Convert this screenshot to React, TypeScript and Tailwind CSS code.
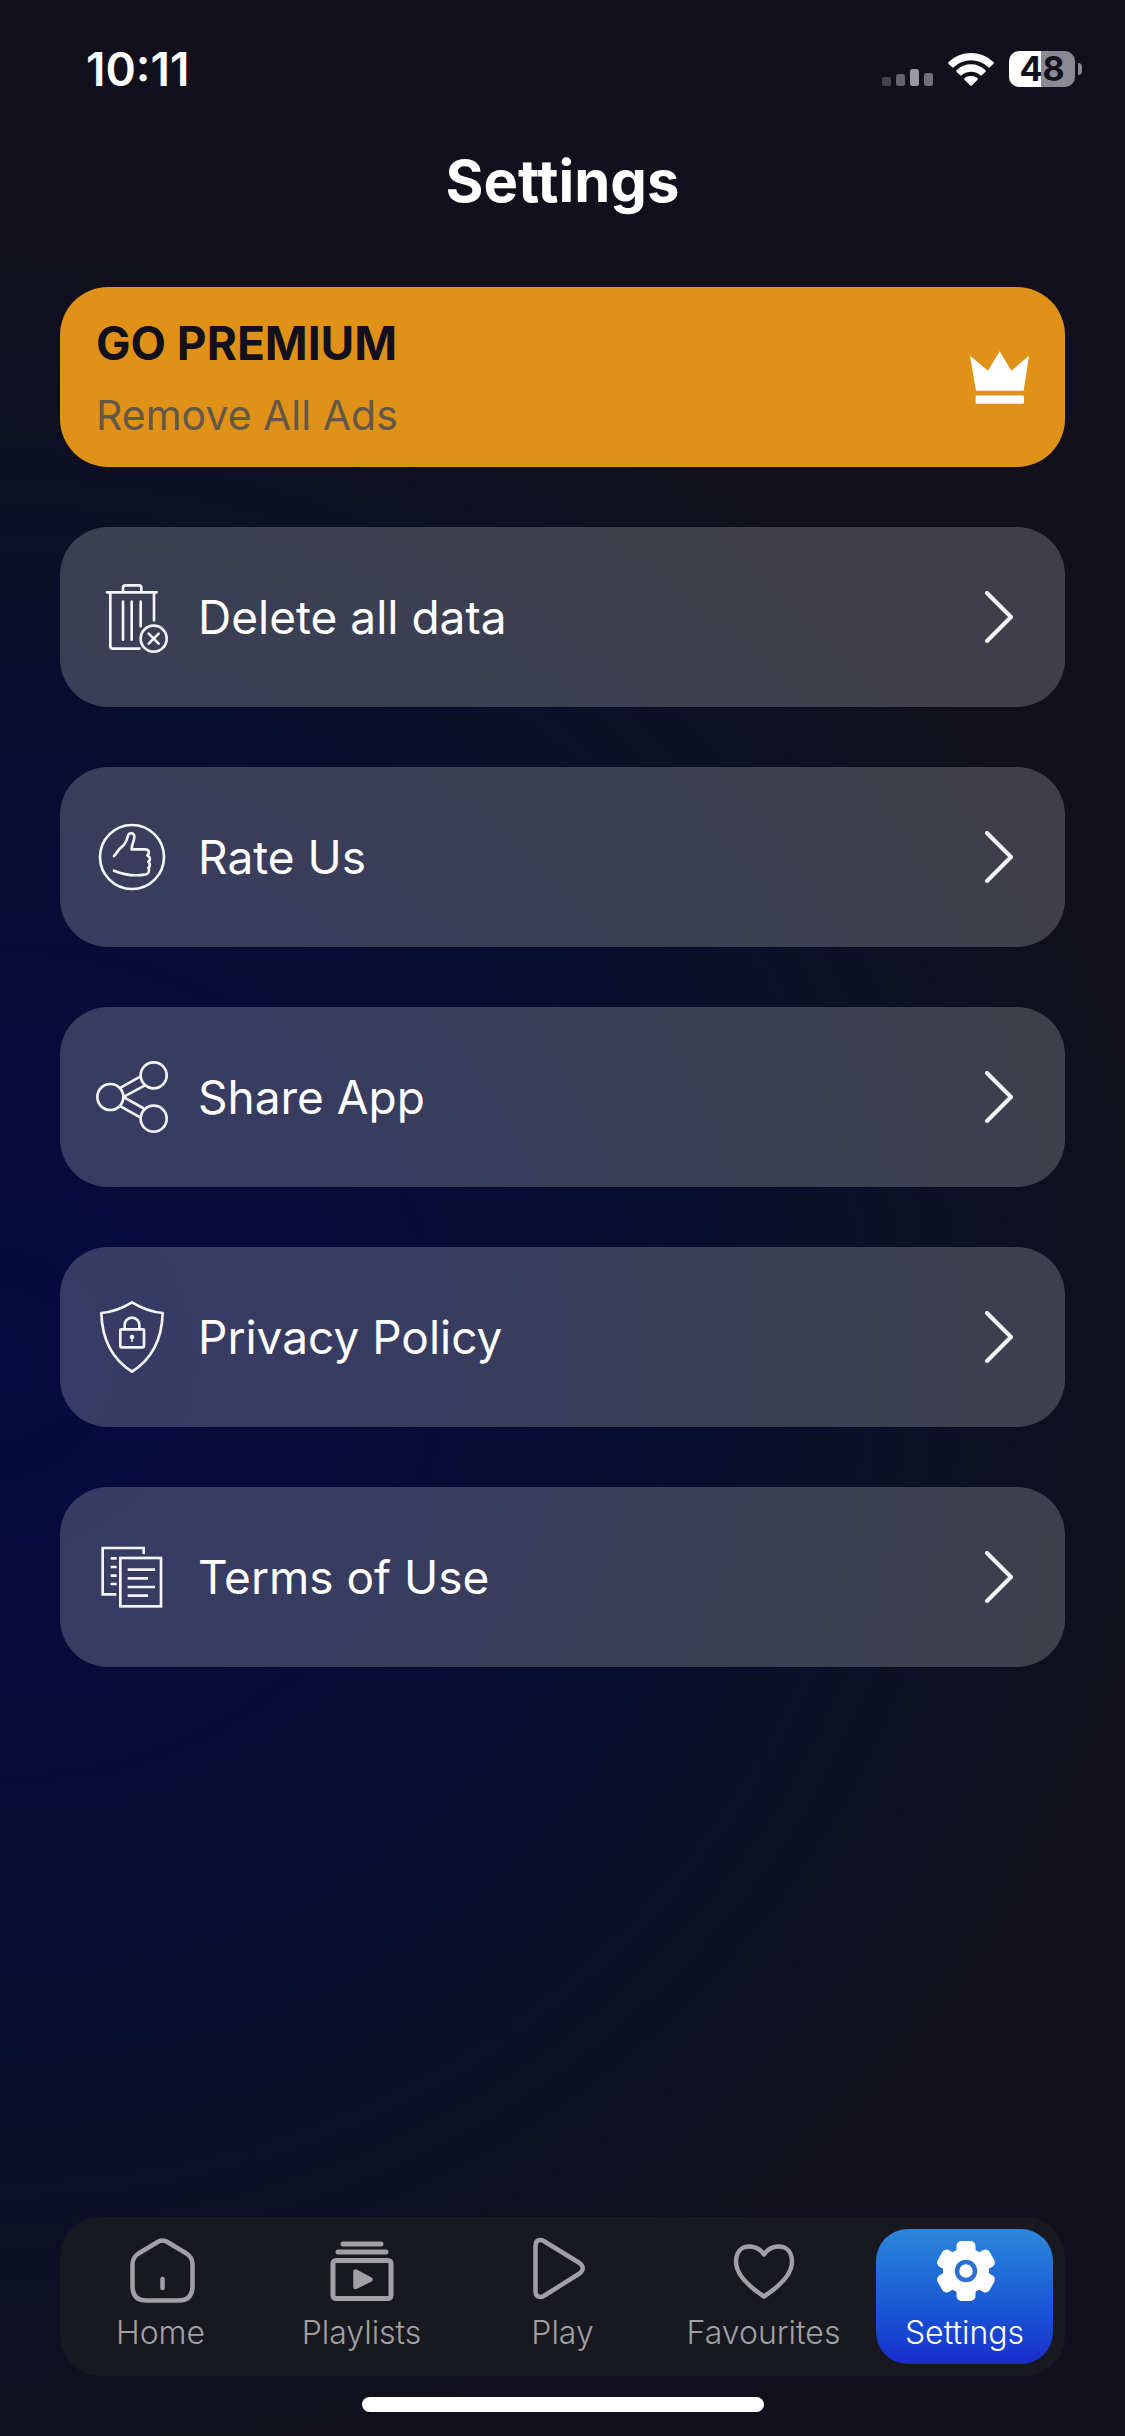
import React from "react";
import { clsx } from "clsx";

/* ---------- Status bar ---------- */

function SignalIcon() {
  return (
    <svg viewBox="0 0 51 17" className="h-[17px] w-[51px]" aria-hidden="true">
      <rect x="0" y="8" width="9" height="9" rx="2.5" fill="#45444f" />
      <rect x="14" y="5" width="9" height="12" rx="2.5" fill="#63626e" />
      <rect x="28" y="0" width="9" height="17" rx="2.5" fill="#9a99a3" />
      <rect x="42" y="4" width="9" height="13" rx="2.5" fill="#716f7b" />
    </svg>
  );
}

function WifiIcon() {
  return (
    <svg viewBox="0 0 138 99" className="h-[33px] w-[46px]" fill="#fff" aria-hidden="true">
      <path d="M2 27C40-9 98-9 136 27Q139 30 136 33L126 42Q123 45 120 42C91 15 47 15 18 42Q15 45 12 42L2 33Q-1 30 2 27Z" />
      <path d="M26 51C51 28 87 28 112 51Q115 54 112 57L102 66Q99 69 96 66C80 53 58 53 42 66Q39 69 36 66L26 57Q23 54 26 51Z" />
      <path d="M50 75C61 67 77 67 88 75Q91 78 88 81L72 97Q69 100 66 97L50 81Q47 78 50 75Z" />
    </svg>
  );
}

function Battery() {
  return (
    <div className="flex items-center gap-[3px]">
      <div className="flex h-9 w-[66px] items-center justify-center rounded-[10px] bg-linear-to-r from-white from-48% to-[#8b8a92] to-48%">
        <span className="text-[34px] leading-9 font-bold text-[#11101c]">48</span>
      </div>
      <div className="h-3 w-1 rounded-r-full bg-[#8b8a92]" />
    </div>
  );
}

function StatusBar() {
  return (
    <div className="flex h-[138px] items-center justify-between pr-[43px] pl-[86px]">
      <span className="text-[46px] leading-none font-semibold">10:11</span>
      <div className="flex items-center gap-[15px]">
        <div className="flex items-end gap-[15px]">
          <SignalIcon />
          <WifiIcon />
        </div>
        <Battery />
      </div>
    </div>
  );
}

/* ---------- Row icons ---------- */

function RowIcon({ children }: { children: React.ReactNode }) {
  return (
    <svg
      viewBox="0 0 216 216"
      className="size-[72px] shrink-0"
      fill="none"
      stroke="#f4f4fb"
      strokeWidth="8"
      strokeLinecap="round"
      strokeLinejoin="round"
      aria-hidden="true"
    >
      {children}
    </svg>
  );
}

function TrashIcon() {
  return (
    <RowIcon>
      <path d="M33 34H182M81 34V20Q81 13 88 13H129Q136 13 136 20V34" />
      <path d="M43 34V195Q43 203 51 203H130M174 34V118" />
      <path d="M81 62V176M107 62V176M134 62V136" />
      <circle cx="173" cy="173" r="39" />
      <path d="M158 158L188 188M188 158L158 188" />
    </RowIcon>
  );
}

function ThumbIcon() {
  return (
    <RowIcon>
      <circle cx="108" cy="108" r="96" />
      <path d="M54 105C62 98 66 86 78 77C90 68 92 58 96 44C98 34 114 34 115 46C116 60 106 70 107 85H148C160 86 162 96 154 103C164 108 164 118 157 122C164 128 162 138 157 140C162 150 158 160 146 161C110 166 80 160 54 149" />
    </RowIcon>
  );
}

function ShareIcon() {
  return (
    <RowIcon>
      <circle cx="43" cy="108" r="39" />
      <circle cx="173" cy="43" r="39" />
      <circle cx="173" cy="173" r="39" />
      <path d="M75 79L134 46M84 107L147 73M84 109L141 141M75 137L134 170" />
    </RowIcon>
  );
}

function ShieldIcon() {
  return (
    <RowIcon>
      <path d="M108 4C82 20 50 33 16 36C18 118 50 175 108 212C166 175 198 118 200 36C166 33 134 20 108 4Z" />
      <rect x="73" y="85" width="71" height="54" rx="3" />
      <path d="M86 84V72A22 22 0 0 1 130 72V84" />
      <circle cx="108" cy="108" r="3" />
      <path d="M108 110V121" strokeWidth="5" />
    </RowIcon>
  );
}

function DocsIcon() {
  return (
    <RowIcon>
      <g strokeLinecap="butt" strokeLinejoin="miter">
        <path d="M143 39V21H20V160H61" />
        <path d="M44 52H62M44 78H62M44 104H62M44 129H62" />
        <rect x="73" y="51" width="122" height="145" />
        <path d="M95 86H177M95 112H156M95 138H177M95 164H156" />
      </g>
    </RowIcon>
  );
}

function CrownIcon() {
  return (
    <svg viewBox="0 0 177 158" className="h-[53px] w-[59px]" fill="#fff" aria-hidden="true">
      <path d="M0 14L54 59L89 0L124 59L177 14L161 119H18Z" />
      <rect x="17" y="133" width="145" height="25" rx="4" />
    </svg>
  );
}

function ChevronIcon() {
  return (
    <svg
      viewBox="0 0 28 52"
      className="h-[52px] w-7"
      fill="none"
      stroke="#f4f4fb"
      strokeWidth="4"
      strokeLinecap="round"
      strokeLinejoin="round"
      aria-hidden="true"
    >
      <path d="M2 2L26 26L2 50" />
    </svg>
  );
}

/* ---------- Tab icons ---------- */

function TabIcon({ children }: { children: React.ReactNode }) {
  return (
    <svg
      viewBox="0 0 72 66"
      className="h-[66px] w-[72px]"
      fill="none"
      stroke="currentColor"
      strokeWidth="4.5"
      strokeLinecap="round"
      strokeLinejoin="round"
      aria-hidden="true"
    >
      {children}
    </svg>
  );
}

function HomeIcon() {
  return (
    <TabIcon>
      <path d="M33.500 4.500Q37.500 2.500 41.500 4.500L61.500 16.500Q67.500 20.500 67.500 27V49Q67.500 63.500 53.500 63.500H21.500Q7.500 63.500 7.500 49V27Q7.500 20.500 13.500 16.500Z" />
      <path d="M37.500 42V51" />
    </TabIcon>
  );
}

function PlaylistsIcon() {
  return (
    <TabIcon>
      <path d="M17 7H55M12 15H60" strokeWidth="5" />
      <rect x="7" y="23.500" width="58" height="38" rx="3" strokeWidth="5" />
      <path d="M29.500 34.500V50L44.500 42.500Z" fill="currentColor" />
    </TabIcon>
  );
}

function PlayIcon() {
  return (
    <TabIcon>
      <path d="M8.500 9Q8.500 3 13.500 3Q15.500 3 17.500 4.500L52.500 26Q59 31 52.500 36.500L17.500 58.500Q15.500 60 13.500 60Q8.500 60 8.500 54Z" />
    </TabIcon>
  );
}

function HeartIcon() {
  return (
    <TabIcon>
      <path d="M36 17.500C31.500 11 26.500 9.500 21.500 9.500C12.500 9.500 8 16 8 25C8 37 18.500 48 36 59.500C53.500 48 64 37 64 25C64 16 59.500 9.500 50.500 9.500C45.500 9.500 40.500 11 36 17.500Z" />
    </TabIcon>
  );
}

function GearIcon() {
  return (
    <TabIcon>
      <g fill="currentColor" stroke="none">
        <circle cx="37" cy="34" r="23" />
        <rect x="27.500" y="4" width="19" height="60" rx="5" />
        <rect x="27.500" y="4" width="19" height="60" rx="5" transform="rotate(60 37 34)" />
        <rect x="27.500" y="4" width="19" height="60" rx="5" transform="rotate(120 37 34)" />
      </g>
      <circle cx="37" cy="34" r="9" stroke="#2c70d2" />
    </TabIcon>
  );
}

const rows = [
  { label: "Delete all data", icon: <TrashIcon /> },
  { label: "Rate Us", icon: <ThumbIcon /> },
  { label: "Share App", icon: <ShareIcon /> },
  { label: "Privacy Policy", icon: <ShieldIcon /> },
  { label: "Terms of Use", icon: <DocsIcon /> },
];

const tabs = [
  { label: "Home", icon: <HomeIcon /> },
  { label: "Playlists", icon: <PlaylistsIcon /> },
  { label: "Play", icon: <PlayIcon /> },
  { label: "Favourites", icon: <HeartIcon /> },
  { label: "Settings", icon: <GearIcon />, active: true },
];

export default function App() {
  return (
    <div className="flex min-h-screen flex-col bg-[#11101c] bg-[radial-gradient(ellipse_105%_46%_at_0%_56%,#060b41_0%,#070c38_35%,#0b0f28_72%,#11101c_100%)] font-[Inter,sans-serif] text-white">
      <StatusBar />

      <header className="flex h-[85px] items-center justify-center">
        <h1 className="text-[58px] leading-none font-bold">Settings</h1>
      </header>

      <main className="flex flex-col gap-[60px] px-[60px] pt-16">
        <button
          type="button"
          className="flex h-[180px] items-center justify-between rounded-[48px] bg-[#df9118] px-9 text-left"
        >
          <span className="flex flex-col gap-2 pt-1">
            <span className="text-[46px] leading-[64px] font-bold text-[#11101c]">GO PREMIUM</span>
            <span className="text-[41px] leading-[64px] text-[#635847]">Remove All Ads</span>
          </span>
          <CrownIcon />
        </button>

        {rows.map((row) => (
          <button
            key={row.label}
            type="button"
            className="flex h-[180px] items-center gap-[30px] rounded-[48px] bg-white/20 pr-[52px] pl-9 text-left"
          >
            {row.icon}
            <span className="flex-1 text-[46px] leading-[64px]">{row.label}</span>
            <ChevronIcon />
          </button>
        ))}
      </main>

      <footer className="mt-auto flex flex-col items-center gap-[21px] px-[60px] pb-6">
        <nav className="grid w-full grid-cols-5 gap-6 rounded-[40px] bg-[#181820] p-3">
          {tabs.map((tab) => (
            <a
              key={tab.label}
              href="#"
              className={clsx(
                "flex h-[135px] flex-col items-center rounded-[32px] pt-2 text-[32px] leading-[60px] font-light whitespace-nowrap",
                tab.active ? "bg-linear-to-b from-[#2f86da] to-[#1b2acd] text-white" : "text-[#a1a1a5]"
              )}
            >
              {tab.icon}
              <span>{tab.label}</span>
            </a>
          ))}
        </nav>
        <div className="h-[15px] w-[402px] rounded-full bg-white" />
      </footer>
    </div>
  );
}
